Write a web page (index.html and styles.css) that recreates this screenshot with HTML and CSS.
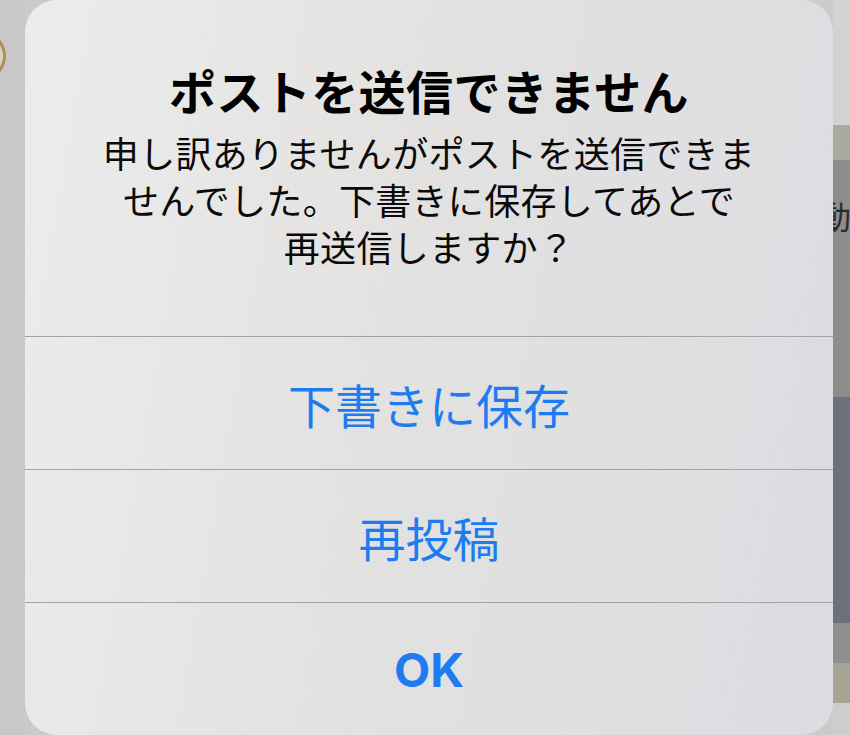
FILE: index.html
```html
<!DOCTYPE html>
<html lang="ja">
<head>
    <meta charset="UTF-8">
    <meta name="viewport" content="width=device-width, initial-scale=1.0">
    <title>ポストを送信できません</title>
    <link rel="stylesheet" href="styles.css">
</head>
<body>
    <div class="screen">
        <div class="side-left">
            <div class="ring"></div>
        </div>
        <div class="alert">
            <div class="alert-body">
                <h1 class="alert-title">ポストを送信できません</h1>
                <p class="alert-message">申し訳ありませんがポストを送信できま<br>せんでした。下書きに保存してあとで<br>再送信しますか？</p>
            </div>
            <div class="alert-action">下書きに保存</div>
            <div class="alert-action">再投稿</div>
            <div class="alert-action bold">OK</div>
        </div>
        <div class="side-right">
            <div class="strip strip-light"></div>
            <div class="strip strip-olive"></div>
            <div class="strip strip-photo"><span class="peek">動</span></div>
            <div class="strip strip-dark"></div>
            <div class="strip strip-gray"></div>
            <div class="strip strip-olive2"></div>
            <div class="strip strip-bottom"></div>
        </div>
    </div>
</body>
</html>
```

FILE: styles.css
```css
body {
    margin: 0;
    font-family: "Inter", "Noto Sans CJK JP", sans-serif;
}
.screen {
    display: grid;
    grid-template-columns: 25px 808px 1fr;
    height: 735px;
    background-color: #cbcbcb;
    overflow: hidden;
}
.side-left {
    background-color: #c8c8c8;
    padding-top: 32px;
    overflow: hidden;
}
.ring {
    width: 46px;
    height: 48px;
    margin-left: -40px;
    box-sizing: border-box;
    border: 3px solid #a88f5c;
    border-radius: 50%;
    background-color: #d8d2c0;
}
.alert {
    display: flex;
    flex-direction: column;
    background: linear-gradient(100deg, #ececec 0%, #e3e2e1 45%, #dcdce1 100%);
    border-radius: 32px;
    overflow: hidden;
}
.alert-body {
    height: 336px;
    box-sizing: border-box;
    padding-top: 63px;
    text-align: center;
    color: #000;
}
.alert-title {
    margin: 0;
    font-size: 47px;
    font-weight: 700;
    line-height: 60px;
    letter-spacing: 0.4px;
}
.alert-message {
    margin: 9px 0 0;
    font-size: 36px;
    line-height: 47px;
    letter-spacing: 0.3px;
    color: #0a0a0a;
}
.alert-action {
    height: 133px;
    box-sizing: border-box;
    border-top: 1px solid #a3a3a8;
    display: flex;
    align-items: center;
    justify-content: center;
    font-size: 47px;
    color: #1e7cf0;
}
.alert-action.bold {
    font-weight: 700;
}
.side-right {
    display: flex;
    flex-direction: column;
    overflow: hidden;
}
.strip-light { height: 125px; background-color: #d2d2d2; }
.strip-olive { height: 35px; background-color: #a9aa9c; }
.strip-photo {
    height: 237px;
    background-color: #8d8d8d;
    overflow: hidden;
}
.peek {
    display: block;
    margin: 38px 0 0 -14px;
    font-size: 32px;
    line-height: 40px;
    color: #2c2c2c;
}
.strip-dark { height: 226px; background-color: #6d717e; }
.strip-gray { height: 40px; background-color: #8e8e8e; }
.strip-olive2 { height: 40px; background-color: #a6a594; }
.strip-bottom { flex: 1; background-color: #cdcdcd; }
```
